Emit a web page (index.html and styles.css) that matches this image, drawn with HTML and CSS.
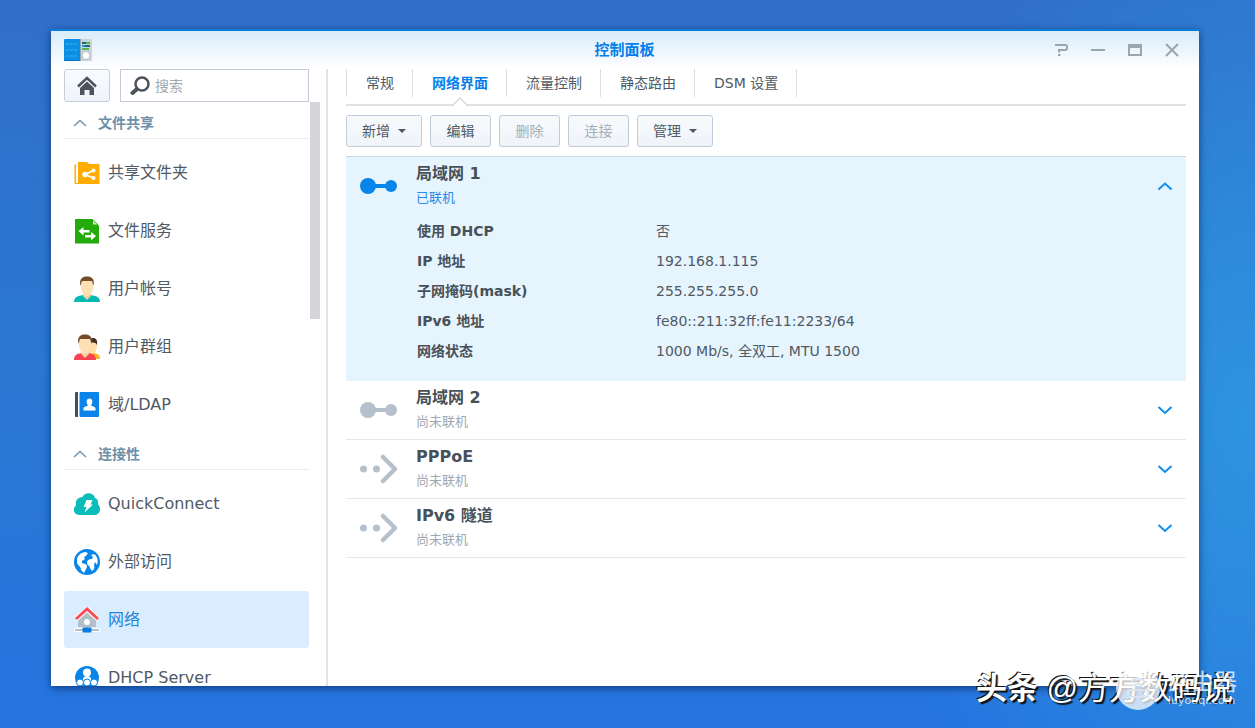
FILE: index.html
```html
<!DOCTYPE html>
<html lang="zh-CN">
<head>
<meta charset="utf-8">
<title>控制面板</title>
<link rel="stylesheet" href="styles.css">
</head>
<body>
<div class="window">
  <header class="titlebar">
    <svg class="app-icon" width="28" height="24" viewBox="0 0 28 24" aria-hidden="true">
      <rect x="0" y="1" width="17" height="22" rx="1" fill="#0a8fe4"/>
      <path d="M2 6h12M2 12h12M2 18h12" stroke="#3fb2f2" stroke-width="1" stroke-dasharray="3 1"/>
      <path d="M0 22.500h17" stroke="#0872c4"/>
      <rect x="16" y="1" width="12" height="22" rx="1" fill="#ccd4da"/>
      <path d="M16.500 1v22" stroke="#8fa5b2"/>
      <rect x="18" y="3" width="8" height="10" fill="#b8dcec"/>
      <path d="M18 5h4M21 8h5" stroke="#34606d" stroke-width="2"/>
      <path d="M22 5h4M18 11h7" stroke="#5db548" stroke-width="2"/>
      <path d="M18 8h3" stroke="#1c9be0" stroke-width="2"/>
      <circle cx="22" cy="17.500" r="4" fill="#fff" stroke="#b3bcc2"/>
    </svg>
    <h1 class="title">控制面板</h1>
    <div class="window-buttons">
      <button class="window-button" aria-label="帮助"><svg width="14" height="14" viewBox="0 0 14 14"><path d="M1 2h10.500q1.500 0 1.500 1.500v1.500q0 2-2 2H5v2.500" fill="none" stroke="#9aa6ae" stroke-width="2"/><rect x="4" y="11" width="2.500" height="2" fill="#9aa6ae"/></svg></button>
      <button class="window-button" aria-label="最小化"><svg width="14" height="14" viewBox="0 0 14 14"><path d="M0 7h14" stroke="#9aa6ae" stroke-width="2"/></svg></button>
      <button class="window-button" aria-label="最大化"><svg width="14" height="14" viewBox="0 0 14 14"><path d="M1 2h12v10H1zM1 4h12" fill="none" stroke="#9aa6ae" stroke-width="2"/></svg></button>
      <button class="window-button" aria-label="关闭"><svg width="14" height="14" viewBox="0 0 14 14"><path d="M1 1l12 12M13 1L1 13" stroke="#9aa6ae" stroke-width="2"/></svg></button>
    </div>
  </header>

  <div class="content">
    <aside class="sidebar">
      <div class="search-row">
        <button class="home-button" aria-label="主页"><svg width="20" height="20" viewBox="0 0 20 20"><path d="M1 10.500L10 2l9 8.500" fill="none" stroke="#4b545c" stroke-width="2.500"/><path d="M10 5.500l7 6.500v7h-4.500v-5h-5v5H3v-7z" fill="#4b545c"/></svg></button>
        <label class="search-box">
          <svg width="20" height="20" viewBox="0 0 20 20" aria-hidden="true"><circle cx="12" cy="8" r="6.500" fill="none" stroke="#4b545c" stroke-width="2.500"/><path d="M7 13L2.500 17" stroke="#4b545c" stroke-width="4" stroke-linecap="round"/></svg>
          <input class="search-input" type="text" placeholder="搜索" aria-label="搜索">
        </label>
      </div>
      <div class="nav-scroll">
        <nav class="nav">
          <h2 class="nav-group"><svg width="14" height="8" viewBox="0 0 14 8" aria-hidden="true"><path d="M1 7l6-5.500L13 7" fill="none" stroke="#7596ad" stroke-width="1.600"/></svg>文件共享</h2>
          <ul class="nav-list">
            <li><a class="nav-item" href="#"><svg width="26" height="26" viewBox="0 0 26 26"><path d="M.5 5v18.500h1.500V4.500H1zM4 2h9l2 2h10.500v20H4z" fill="#ffab00"/><path d="M1 23h4v1H1z" fill="#ffab00"/><path d="M19.500 10.500L11 14.500l8.500 3.500" fill="none" stroke="#fff" stroke-width="1.700"/><circle cx="19.500" cy="10.500" r="2" fill="#fff"/><circle cx="11" cy="14.500" r="2.700" fill="#fff"/><circle cx="19.500" cy="18" r="2" fill="#fff"/></svg>共享文件夹</a></li>
            <li><a class="nav-item" href="#"><svg width="26" height="26" viewBox="0 0 26 26"><path d="M1 1h17.500L25 7.500V25.500H1z" fill="#23ab0b"/><path d="M19 2.500v4h4z" fill="#d6f2cd"/><path d="M4.500 13l5-4v3h6v2.500h-6v3zM22 18l-5-4v3h-6v2.500h6v3z" fill="#fff"/></svg>文件服务</a></li>
            <li><a class="nav-item" href="#"><svg width="26" height="26" viewBox="0 0 26 26"><path d="M0 26c0-5 4-6 9-7h8c5 1 9 2 9 7z" fill="#04b9b4"/><path d="M9 17h8v3l-4 4-4-4z" fill="#f3cf9d"/><path d="M7 5h12v6c0 5-3 9-6 9s-6-4-6-9z" fill="#fde0b6"/><path d="M6.500 10C5 3 8 .5 13 .5S21 3 19.500 10L18 5H8z" fill="#754c2b"/></svg>用户帐号</a></li>
            <li><a class="nav-item" href="#"><svg width="26" height="26" viewBox="0 0 26 26"><path d="M15 25h11c0-4-2-5-5-6h-5z" fill="#ffb820"/><path d="M15 6h8v6c0 4-2 7-5 8h-3z" fill="#ffdca8"/><path d="M16 5c4-2 8-1 7 6l-1.500-2L16 8z" fill="#422f25"/><path d="M0 26c0-5 3-6 7-7h8c5 1 7 3 7 7z" fill="#fa4150"/><path d="M7 17h8v3l-4 4-4-4z" fill="#f3cf9d"/><path d="M5 5h12v6c0 5-3 9-6 9s-6-4-6-9z" fill="#fde0b6"/><path d="M4.500 10C3 3 6 .5 11 .5S19 3 17.500 10L16 5H6z" fill="#754c2b"/></svg>用户群组</a></li>
            <li><a class="nav-item" href="#"><svg width="26" height="26" viewBox="0 0 26 26"><path d="M1 1q0-1 1-1h2v25H2q-1 0-1-1z" fill="#424f5a"/><rect x="5.500" y="0" width="19.500" height="25" rx="1" fill="#0a84e8"/><path d="M9.500 18.500v-2c0-2 3-2 4.500-3-2-3-2-7 1.500-7s3.500 4 1.500 7c1 1 4.500 1 4.500 3v2z" fill="#fff"/></svg>域/LDAP</a></li>
          </ul>
          <h2 class="nav-group"><svg width="14" height="8" viewBox="0 0 14 8" aria-hidden="true"><path d="M1 7l6-5.500L13 7" fill="none" stroke="#7596ad" stroke-width="1.600"/></svg>连接性</h2>
          <ul class="nav-list">
            <li><a class="nav-item" href="#"><svg width="26" height="26" viewBox="0 0 26 26"><path d="M5 24c-6-.5-6.500-7-3-9.500C1 9 4 6.500 8.500 6c2-5 11-5 12.500 1 3 1 3.500 4 3 6.500 3.500 3 2.500 10-3 10.500z" fill="#0abdb8"/><path d="M12.500 9h6l-2 4.500H19L10.500 21.500l2-5.500H9.500z" fill="#fff"/></svg>QuickConnect</a></li>
            <li><a class="nav-item" href="#"><svg width="26" height="26" viewBox="0 0 26 26"><circle cx="13" cy="13" r="13" fill="#0785e8"/><path d="M3 11c0-4 3-7 8-8l3 1-2 3-2 1 1 2-3 2v2l3 1c3 1 2 4 1 5l-2 4-3-3c0-4-3-4-4-7zM17 6c2-1 4-1 5 1 2 2 2 6 1 9l-2-3-1 3c1 2 0 5-2 6l-2-3c0-3-3-2-3-5 0-3 2-4 5-4l1-2z" fill="#fff"/></svg>外部访问</a></li>
            <li><a class="nav-item nav-item-active" href="#" aria-current="page"><svg width="26" height="26" viewBox="0 0 26 26"><path d="M13 5l9 8v7H4v-7z" fill="#b4c0c9"/><circle cx="13" cy="15" r="3" fill="#fff"/><path d="M2 12L13 2l11 10" fill="none" stroke="#fff" stroke-width="5"/><path d="M2 12L13 2l11 10" fill="none" stroke="#f94e55" stroke-width="3"/><path d="M0 21h26v4H0z" fill="#fff"/><path d="M1 23h24M13 19v3" stroke="#b4c0c9" stroke-width="2"/><rect x="8.500" y="20.500" width="9" height="5" rx="1" fill="#087de0"/></svg>网络</a></li>
            <li><a class="nav-item" href="#"><svg width="26" height="26" viewBox="0 0 26 26"><circle cx="13" cy="13" r="12" fill="#0785e8"/><circle cx="13" cy="7.500" r="4" fill="#fff"/><path d="M9 14c0-4 8-4 8 0l1 2H8z" fill="#fff"/><g fill="#fff" stroke="#0785e8"><circle cx="6" cy="17.500" r="3.500"/><circle cx="13" cy="17.500" r="3.500"/><circle cx="20" cy="17.500" r="3.500"/></g></svg>DHCP Server</a></li>
          </ul>
        </nav>
        <div class="scroll-track"><div class="scroll-thumb"></div></div>
      </div>
    </aside>

    <main class="main">
      <nav class="tabs">
        <a class="tab" href="#">常规</a>
        <a class="tab tab-active" href="#" aria-current="page">网络界面<svg class="tab-pointer" width="16" height="9" viewBox="0 0 16 9" aria-hidden="true"><path d="M0 9L8 1l8 8" fill="#fff" stroke="#d6d9dc" stroke-width="1.500"/></svg></a>
        <a class="tab" href="#">流量控制</a>
        <a class="tab" href="#">静态路由</a>
        <a class="tab" href="#">DSM 设置</a>
      </nav>

      <div class="toolbar">
        <button class="button">新增<span class="caret"></span></button>
        <button class="button">编辑</button>
        <button class="button" disabled>删除</button>
        <button class="button" disabled>连接</button>
        <button class="button">管理<span class="caret"></span></button>
      </div>

      <section class="interfaces">
        <article class="interface interface-open">
          <div class="interface-head">
            <svg width="38" height="30" viewBox="0 0 38 30" aria-hidden="true"><g fill="#0785e8"><circle cx="8" cy="15" r="8"/><circle cx="31" cy="15" r="6"/><path d="M8 13h23v4H8z"/></g></svg>
            <div class="interface-text"><h3 class="interface-name">局域网 1</h3><p class="interface-status">已联机</p></div>
            <button class="toggle" aria-label="收起"><svg width="16" height="10" viewBox="0 0 16 10"><path d="M1.500 8.500L8 2.500l6.500 6" fill="none" stroke="#0e8deb" stroke-width="2"/></svg></button>
          </div>
          <table class="details">
            <tr><th scope="row">使用 DHCP</th><td>否</td></tr>
            <tr><th scope="row">IP 地址</th><td>192.168.1.115</td></tr>
            <tr><th scope="row">子网掩码(mask)</th><td>255.255.255.0</td></tr>
            <tr><th scope="row">IPv6 地址</th><td>fe80::211:32ff:fe11:2233/64</td></tr>
            <tr><th scope="row">网络状态</th><td>1000 Mb/s, 全双工, MTU 1500</td></tr>
          </table>
        </article>
        <article class="interface">
          <div class="interface-head">
            <svg width="38" height="30" viewBox="0 0 38 30" aria-hidden="true"><g fill="#b5c0ca"><circle cx="8" cy="15" r="8"/><circle cx="31" cy="15" r="6"/><path d="M8 13h23v4H8z"/></g></svg>
            <div class="interface-text"><h3 class="interface-name">局域网 2</h3><p class="interface-status">尚未联机</p></div>
            <button class="toggle" aria-label="展开"><svg width="16" height="10" viewBox="0 0 16 10"><path d="M1.500 2L8 8l6.500-6" fill="none" stroke="#0e8deb" stroke-width="2"/></svg></button>
          </div>
        </article>
        <article class="interface">
          <div class="interface-head">
            <svg width="38" height="30" viewBox="0 0 38 30" aria-hidden="true"><circle cx="3.500" cy="15" r="3.500" fill="#b5c0ca"/><circle cx="16.500" cy="15" r="3.500" fill="#b5c0ca"/><path d="M23 3l12 12-12 12" fill="none" stroke="#b5c0ca" stroke-width="4.500" stroke-linecap="round" stroke-linejoin="round"/></svg>
            <div class="interface-text"><h3 class="interface-name">PPPoE</h3><p class="interface-status">尚未联机</p></div>
            <button class="toggle" aria-label="展开"><svg width="16" height="10" viewBox="0 0 16 10"><path d="M1.500 2L8 8l6.500-6" fill="none" stroke="#0e8deb" stroke-width="2"/></svg></button>
          </div>
        </article>
        <article class="interface">
          <div class="interface-head">
            <svg width="38" height="30" viewBox="0 0 38 30" aria-hidden="true"><circle cx="3.500" cy="15" r="3.500" fill="#b5c0ca"/><circle cx="16.500" cy="15" r="3.500" fill="#b5c0ca"/><path d="M23 3l12 12-12 12" fill="none" stroke="#b5c0ca" stroke-width="4.500" stroke-linecap="round" stroke-linejoin="round"/></svg>
            <div class="interface-text"><h3 class="interface-name">IPv6 隧道</h3><p class="interface-status">尚未联机</p></div>
            <button class="toggle" aria-label="展开"><svg width="16" height="10" viewBox="0 0 16 10"><path d="M1.500 2L8 8l6.500-6" fill="none" stroke="#0e8deb" stroke-width="2"/></svg></button>
          </div>
        </article>
      </section>
    </main>
  </div>
</div>

<div class="credit"><b>头条</b> @方方数码说</div>
<div class="site-mark">
  <svg width="44" height="44" viewBox="0 0 44 44" aria-hidden="true"><circle cx="22" cy="22" r="22" fill="#fff" fill-opacity=".75"/><path d="M15 17c2-6 12-6 14 0M18 20c2-3 6-3 8 0M12 24h20v7H12z" fill="none" stroke="#dbe4ee" stroke-width="2"/></svg>
  <div class="site-text"><span class="site-name">路由器</span><span class="site-url">luyouqi.com</span></div>
</div>
</body>
</html>
```
FILE: styles.css
```css
* {
  box-sizing: border-box;
}

body {
  margin: 0;
  height: 100vh;
  padding: 29px 56px 42px 51px;
  overflow: hidden;
  position: relative;
  font: 14px/20px "DejaVu Sans", "Noto Sans CJK SC", sans-serif;
  color: #505a64;
  background:
    radial-gradient(ellipse 30% 75% at 100% 58%, #2e94e0, transparent),
    linear-gradient(#306fc9, #2b78d2 50%, #2574e0);
}

h1,
h2,
h3,
p,
ul {
  margin: 0;
  padding: 0;
  list-style: none;
}

a {
  color: inherit;
  text-decoration: none;
}

button,
input {
  font: inherit;
  color: inherit;
}

svg {
  display: block;
  flex: none;
}

.window {
  height: 100%;
  display: flex;
  flex-direction: column;
  border-top: 2px solid #0a7dd8;
  background: #fff;
  box-shadow: 0 2px 8px rgba(0, 20, 70, 0.6);
}

.titlebar {
  display: grid;
  grid-template-columns: 1fr auto 1fr;
  align-items: center;
  flex: none;
  height: 38px;
  padding: 0 20px 0 13px;
  background: linear-gradient(#d9ebfa, #fff);
}

.title {
  padding-left: 6px;
  font-size: 15px;
  font-weight: 700;
  color: #057feb;
}

.window-buttons {
  display: flex;
  justify-content: flex-end;
  gap: 23px;
}

.window-button,
.toggle {
  padding: 0;
  border: 0;
  background: none;
}

.content {
  flex: 1;
  min-height: 0;
  display: flex;
}

.sidebar {
  flex: none;
  width: 277px;
  display: flex;
  flex-direction: column;
  padding-left: 13px;
  border-right: 2px solid #e1e3e6;
}

.search-row {
  flex: none;
  display: flex;
  gap: 10px;
  padding-right: 17px;
  height: 33px;
}

.home-button {
  width: 46px;
  padding: 0;
  display: grid;
  place-items: center;
  border: 1px solid #c3ced9;
  border-radius: 3px;
  background: linear-gradient(#f9fbfe, #eff4fa);
}

.search-box {
  flex: 1;
  min-width: 0;
  display: flex;
  align-items: center;
  gap: 5px;
  padding: 0 9px;
  border: 1px solid #c3ccd6;
}

.search-input {
  flex: 1;
  min-width: 0;
  padding: 0;
  border: 0;
  outline: 0;
  background: none;
}

.search-input::placeholder {
  color: #a0a8b0;
}

.nav-scroll {
  flex: 1;
  min-height: 0;
  display: flex;
  overflow: hidden;
}

.nav {
  flex: 1;
  padding-top: 6px;
}

.scroll-track {
  width: 17px;
  padding: 0 6px 0 1px;
}

.scroll-thumb {
  height: 217px;
  background: #d3d5d8;
}

.nav-group {
  display: flex;
  align-items: center;
  gap: 11px;
  height: 31px;
  padding-left: 9px;
  border-bottom: 1px solid #e6ebee;
  font-size: 14px;
  color: #6d90a8;
}

.nav-list {
  padding: 5px 0;
}

.nav-list li {
  margin-bottom: 1px;
}

.nav-item {
  display: flex;
  align-items: center;
  gap: 8px;
  height: 57px;
  padding-left: 10px;
  border-radius: 3px;
  font-size: 16px;
}

.nav-item-active {
  background: #d9edff;
  color: #2482d8;
}

.main {
  flex: 1;
  min-width: 0;
  padding: 0 13px 0 18px;
}

.tabs {
  display: flex;
  padding-bottom: 7px;
  border-bottom: 2px solid #dfe1e3;
}

.tab {
  position: relative;
  padding: 0 18px 0 19px;
  line-height: 28px;
  border-left: 1px solid #dadfe4;
}

.tab:last-child {
  border-right: 1px solid #dadfe4;
}

.tab-active {
  font-weight: 700;
  color: #057feb;
}

.tab-pointer {
  position: absolute;
  left: calc(50% - 8px);
  bottom: -9px;
}

.toolbar {
  display: flex;
  gap: 8px;
  padding: 9px 0;
}

.button {
  display: flex;
  align-items: center;
  justify-content: center;
  gap: 8px;
  min-width: 61px;
  height: 32px;
  padding: 0 15px;
  border: 1px solid #c0ccd8;
  border-radius: 3px;
  background: linear-gradient(#f8fafd, #eff4fa);
}

.button:disabled {
  color: #a5afb8;
}

.caret {
  border: 4px solid transparent;
  border-top-color: currentColor;
  border-bottom: 0;
}

.interface {
  border-bottom: 1px solid #e3e7ea;
}

.interface-open {
  padding-bottom: 14px;
  border-top: 1px solid #c5d8e5;
  border-bottom-color: #e6f4fe;
  background: #e6f4fe;
}

.interface-head {
  display: flex;
  align-items: center;
  gap: 18px;
  height: 58px;
  padding: 0 13px 0 14px;
}

.interface-text {
  flex: 1;
  display: flex;
  flex-direction: column;
  gap: 4px;
}

.interface-name {
  font-size: 16px;
  color: #485159;
}

.interface-status {
  font-size: 13px;
  color: #a0a9b2;
}

.interface-open .interface-status {
  color: #2b8ae6;
}

.details {
  width: 100%;
  margin-top: 1px;
  border-collapse: collapse;
}

.details th,
.details td {
  height: 30px;
  padding: 0;
  text-align: left;
}

.details th {
  width: 310px;
  padding-left: 71px;
  color: #485159;
}

.credit {
  position: absolute;
  right: 22px;
  bottom: 17px;
  font-size: 31px;
  line-height: 44px;
  font-family: "Liberation Sans", "Noto Sans CJK SC", sans-serif;
  color: #fff;
  text-shadow: -1px -1px 0 #111, 2px 2px 1px #111;
  white-space: nowrap;
}

.site-mark {
  position: absolute;
  right: 18px;
  bottom: 18px;
  display: flex;
  align-items: center;
  gap: 8px;
  color: rgba(255, 255, 255, 0.75);
}

.site-text {
  display: flex;
  flex-direction: column;
}

.site-name {
  font-size: 23px;
  line-height: 26px;
}

.site-url {
  font-size: 11px;
  line-height: 12px;
}
```
